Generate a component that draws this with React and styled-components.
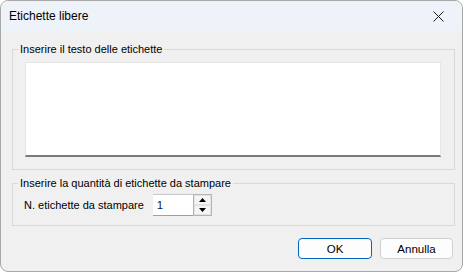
import React, { useState } from "react";
import styled, { createGlobalStyle } from "styled-components";

const GlobalStyle = createGlobalStyle`
  html, body {
    margin: 0;
    padding: 0;
    background: #ffffff;
  }
  body {
    font-family: "Liberation Sans", Arial, sans-serif;
    font-size: 11px;
    color: #000;
  }
`;

const Window = styled.div`
  width: 463px;
  height: 272px;
  box-sizing: border-box;
  border: 1px solid #a8a8a8;
  border-radius: 8px;
  overflow: hidden;
  background: #f0f0f0;
  display: flex;
  flex-direction: column;
`;

const TitleBar = styled.div`
  height: 30px;
  flex: none;
  background: #eef2f9;
  display: flex;
  align-items: center;
  justify-content: space-between;
  padding-left: 8px;
`;

const Title = styled.span`
  font-size: 12px;
  line-height: 14px;
  color: #000;
`;

const CloseButton = styled.button`
  width: 46px;
  height: 30px;
  border: none;
  background: transparent;
  display: flex;
  align-items: center;
  justify-content: center;
  padding: 0;
  padding-right: 2px;
`;

const Body = styled.div`
  flex: 1;
  display: flex;
  flex-direction: column;
  padding: 11px 7px 0 11px;
`;

const Group = styled.fieldset`
  margin: ${(p) => (p.$first ? "0" : "6px 0 0 0")};
  border: 1px solid #d9d9d9;
  padding: ${(p) => p.$pad};
  min-width: 0;
`;

const Legend = styled.legend`
  padding: 0 2px;
  margin-left: ${(p) => p.$offset}px;
  font-size: 11px;
  line-height: 14px;
`;

const TextBox = styled.textarea`
  display: block;
  width: 416px;
  height: 95px;
  box-sizing: border-box;
  resize: none;
  border: 1px solid #e6e6e6;
  border-bottom: 2px solid #7a7a7a;
  background: #fff;
  outline: none;
  font: inherit;
  margin: 0;
`;

const Row = styled.div`
  display: flex;
  align-items: center;
  gap: 9px;
`;

const Label = styled.span`
  padding-left: 1px;
  font-size: 11px;
`;

const Spinner = styled.div`
  display: flex;
  height: 22px;
`;

const SpinInput = styled.input`
  width: 40px;
  height: 22px;
  box-sizing: border-box;
  border: none;
  border-top: 1px solid #c8c8c8;
  border-bottom: 1px solid #a0a0a0;
  background: #fff;
  padding: 0 0 0 4px;
  font: inherit;
  font-size: 11.5px;
  color: #0b1a4a;
  outline: none;
`;

const SpinButtons = styled.div`
  display: flex;
  flex-direction: column;
  width: 19px;
  height: 22px;
  box-sizing: border-box;
  border: 1px solid #b4b4b4;
  background: #f0f0f0;
`;

const SpinBtn = styled.div`
  flex: 1;
  display: flex;
  align-items: center;
  justify-content: center;
  background: #f5f5f5;
  border: 1px solid #e3e3e3;
`;

const Buttons = styled.div`
  display: flex;
  justify-content: flex-end;
  gap: 8px;
  margin-top: 12px;
  padding-right: 2px;
`;

const Button = styled.button`
  width: ${(p) => p.$w}px;
  height: 21px;
  box-sizing: border-box;
  border-radius: 4px;
  border: 1px solid ${(p) => (p.$primary ? "#0067c0" : "#d0d0d0")};
  background: #fdfdfd;
  font-family: inherit;
  font-size: 11.5px;
  color: #000;
  padding: 0;
`;

const Arrow = ({ up }) => (
  <svg width="7" height="4" viewBox="0 0 7 4">
    <polygon points={up ? "3.5,0 7,4 0,4" : "0,0 7,0 3.5,4"} fill="#000" />
  </svg>
);

export default function App() {
  const [count, setCount] = useState("1");
  return (
    <>
      <GlobalStyle />
      <Window>
        <TitleBar>
          <Title>Etichette libere</Title>
          <CloseButton aria-label="Chiudi">
            <svg width="11" height="11" viewBox="0 0 11 11">
              <path d="M0.5 0.5 L10.5 10.5 M10.5 0.5 L0.5 10.5" stroke="#1a1a1a" strokeWidth="1" />
            </svg>
          </CloseButton>
        </TitleBar>
        <Body>
          <Group $first $pad="6px 12px 12px 12px">
            <Legend $offset={-7}>Inserire il testo delle etichette</Legend>
            <TextBox />
          </Group>
          <Group $pad="4px 10px 9px 10px">
            <Legend $offset={-5}>Inserire la quantità di etichette da stampare</Legend>
            <Row>
              <Label>N. etichette da stampare</Label>
              <Spinner>
                <SpinInput value={count} onChange={(e) => setCount(e.target.value)} />
                <SpinButtons>
                  <SpinBtn>
                    <Arrow up />
                  </SpinBtn>
                  <SpinBtn>
                    <Arrow />
                  </SpinBtn>
                </SpinButtons>
              </Spinner>
            </Row>
          </Group>
          <Buttons>
            <Button $primary $w={74}>OK</Button>
            <Button $w={73}>Annulla</Button>
          </Buttons>
        </Body>
      </Window>
    </>
  );
}
